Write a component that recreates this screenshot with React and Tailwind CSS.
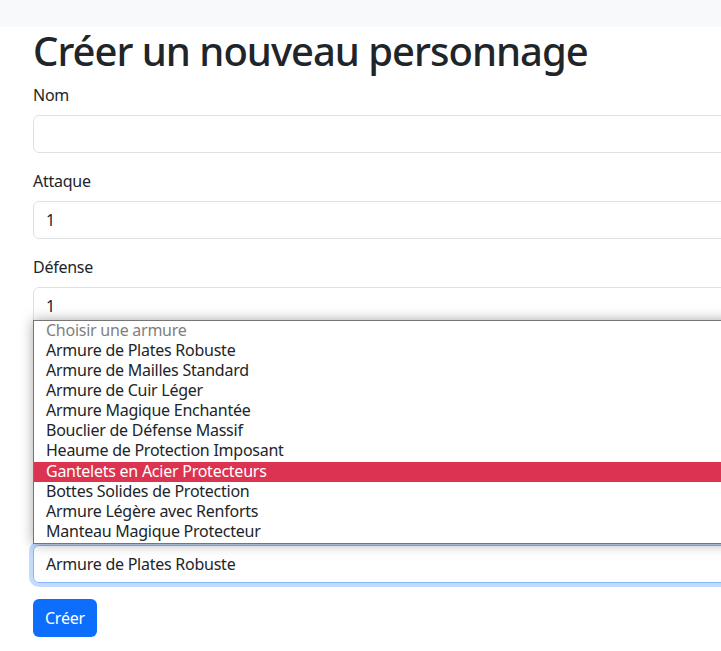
import React from "react";

const armures = [
  "Armure de Plates Robuste",
  "Armure de Mailles Standard",
  "Armure de Cuir Léger",
  "Armure Magique Enchantée",
  "Bouclier de Défense Massif",
  "Heaume de Protection Imposant",
  "Gantelets en Acier Protecteurs",
  "Bottes Solides de Protection",
  "Armure Légère avec Renforts",
  "Manteau Magique Protecteur",
];

function Field({ label, value }) {
  return (
    <div className="mb-4">
      <label className="block mb-2 leading-6">{label}</label>
      <div className="h-[38px] border border-[#dee2e6] rounded-md px-3 flex items-center leading-6">
        {value}
      </div>
    </div>
  );
}

export default function App() {
  return (
    <div className="min-h-[651px] bg-white text-[#212529] overflow-hidden font-['Noto_Sans',sans-serif] text-base tracking-[-0.25px]">
      {/* top nav strip */}
      <div className="h-[27px] bg-[#f8f9fa]" />

      <div className="relative w-[900px] pl-[33px]">
        <h1 className="text-[40px] leading-[48px] font-medium mb-2 tracking-[-1px]">Créer un nouveau personnage</h1>

        <Field label="Nom" value="" />
        <Field label="Attaque" value="1" />
        <Field label="Défense" value="1" />
        <Field label="Points de vie" value="10" />
        <Field label="Arme" value="Choisir une arme" />

        <div className="mb-4">
          <label className="block mb-2 leading-6">Armure</label>
          <div className="h-[38px] border border-[#86b7fe] rounded-md px-3 flex items-center leading-6 shadow-[0_0_0_4px_rgba(13,110,253,0.25)]">
            Armure de Plates Robuste
          </div>
        </div>

        <button className="bg-[#0d6efd] text-white rounded-md h-[38px] px-3 leading-6">Créer</button>

        {/* native select popup */}
        <div className="absolute left-[33px] top-[293px] w-[900px] h-[224px] bg-white border border-[#767676] shadow-[0_0_12px_rgba(0,0,0,0.35)]">
          <div className="pl-3 text-[#808080] leading-[20.15px]">
            <span className="relative -top-[1.5px]">Choisir une armure</span>
          </div>
          {armures.map((a, i) => (
            <div
              key={a}
              className={
                i === 6
                  ? "pl-3 leading-[20.15px] bg-[#db3350] text-white"
                  : "pl-3 leading-[20.15px]"
              }
            >
              <span className="relative -top-[1.5px]">{a}</span>
            </div>
          ))}
        </div>
      </div>
    </div>
  );
}
